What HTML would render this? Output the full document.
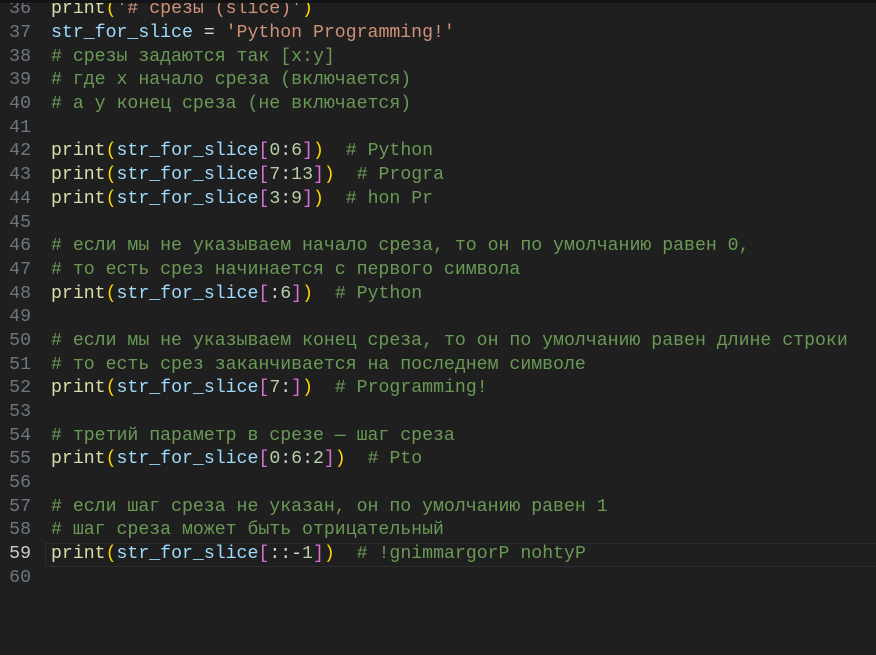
<!DOCTYPE html>
<html><head><meta charset="utf-8"><style>
html,body{margin:0;padding:0;background:#1f1f1f;width:876px;height:655px;overflow:hidden}
.top{position:absolute;left:0;top:0;width:876px;height:3px;background:#141414;z-index:2}
.ed{position:absolute;left:0;top:-1.7px;font-family:"Liberation Mono","DejaVu Sans Mono",monospace;font-size:18.2px;line-height:23.7px;color:#d4d4d4}
.l{height:23.7px;position:relative;white-space:pre}
.n{display:inline-block;width:31px;text-align:right;color:#6e7681;margin-right:20px}
.cur .n{color:#cccccc}
.cur::before{content:"";position:absolute;left:45px;top:0;width:840px;height:22px;border:1px solid #2c2c2c}
.f{color:#dcdcaa}.v{color:#9cdcfe}.s{color:#ce9178}.c{color:#6a9955}.p{color:#ffd700}.b{color:#da70d6}.d{color:#b5cea8}
</style></head><body>
<div class="top"></div>
<div class="ed"><div class="l"><span class="n">36</span><span class="f">print</span><span class="p">(</span><span class="s">'# срезы (slice)'</span><span class="p">)</span></div><div class="l"><span class="n">37</span><span class="v">str_for_slice</span> = <span class="s">'Python Programming!'</span></div><div class="l"><span class="n">38</span><span class="c"># срезы задаются так [x:y]</span></div><div class="l"><span class="n">39</span><span class="c"># где x начало среза (включается)</span></div><div class="l"><span class="n">40</span><span class="c"># а y конец среза (не включается)</span></div><div class="l"><span class="n">41</span></div><div class="l"><span class="n">42</span><span class="f">print</span><span class="p">(</span><span class="v">str_for_slice</span><span class="b">[</span><span class="d">0</span>:<span class="d">6</span><span class="b">]</span><span class="p">)</span>  <span class="c"># Python</span></div><div class="l"><span class="n">43</span><span class="f">print</span><span class="p">(</span><span class="v">str_for_slice</span><span class="b">[</span><span class="d">7</span>:<span class="d">13</span><span class="b">]</span><span class="p">)</span>  <span class="c"># Progra</span></div><div class="l"><span class="n">44</span><span class="f">print</span><span class="p">(</span><span class="v">str_for_slice</span><span class="b">[</span><span class="d">3</span>:<span class="d">9</span><span class="b">]</span><span class="p">)</span>  <span class="c"># hon Pr</span></div><div class="l"><span class="n">45</span></div><div class="l"><span class="n">46</span><span class="c"># если мы не указываем начало среза, то он по умолчанию равен 0,</span></div><div class="l"><span class="n">47</span><span class="c"># то есть срез начинается с первого символа</span></div><div class="l"><span class="n">48</span><span class="f">print</span><span class="p">(</span><span class="v">str_for_slice</span><span class="b">[</span>:<span class="d">6</span><span class="b">]</span><span class="p">)</span>  <span class="c"># Python</span></div><div class="l"><span class="n">49</span></div><div class="l"><span class="n">50</span><span class="c"># если мы не указываем конец среза, то он по умолчанию равен длине строки</span></div><div class="l"><span class="n">51</span><span class="c"># то есть срез заканчивается на последнем символе</span></div><div class="l"><span class="n">52</span><span class="f">print</span><span class="p">(</span><span class="v">str_for_slice</span><span class="b">[</span><span class="d">7</span>:<span class="b">]</span><span class="p">)</span>  <span class="c"># Programming!</span></div><div class="l"><span class="n">53</span></div><div class="l"><span class="n">54</span><span class="c"># третий параметр в срезе — шаг среза</span></div><div class="l"><span class="n">55</span><span class="f">print</span><span class="p">(</span><span class="v">str_for_slice</span><span class="b">[</span><span class="d">0</span>:<span class="d">6</span>:<span class="d">2</span><span class="b">]</span><span class="p">)</span>  <span class="c"># Pto</span></div><div class="l"><span class="n">56</span></div><div class="l"><span class="n">57</span><span class="c"># если шаг среза не указан, он по умолчанию равен 1</span></div><div class="l"><span class="n">58</span><span class="c"># шаг среза может быть отрицательный</span></div><div class="l cur"><span class="n">59</span><span class="f">print</span><span class="p">(</span><span class="v">str_for_slice</span><span class="b">[</span>::-<span class="d">1</span><span class="b">]</span><span class="p">)</span>  <span class="c"># !gnimmargorP nohtyP</span></div><div class="l"><span class="n">60</span></div></div>
</body></html>
